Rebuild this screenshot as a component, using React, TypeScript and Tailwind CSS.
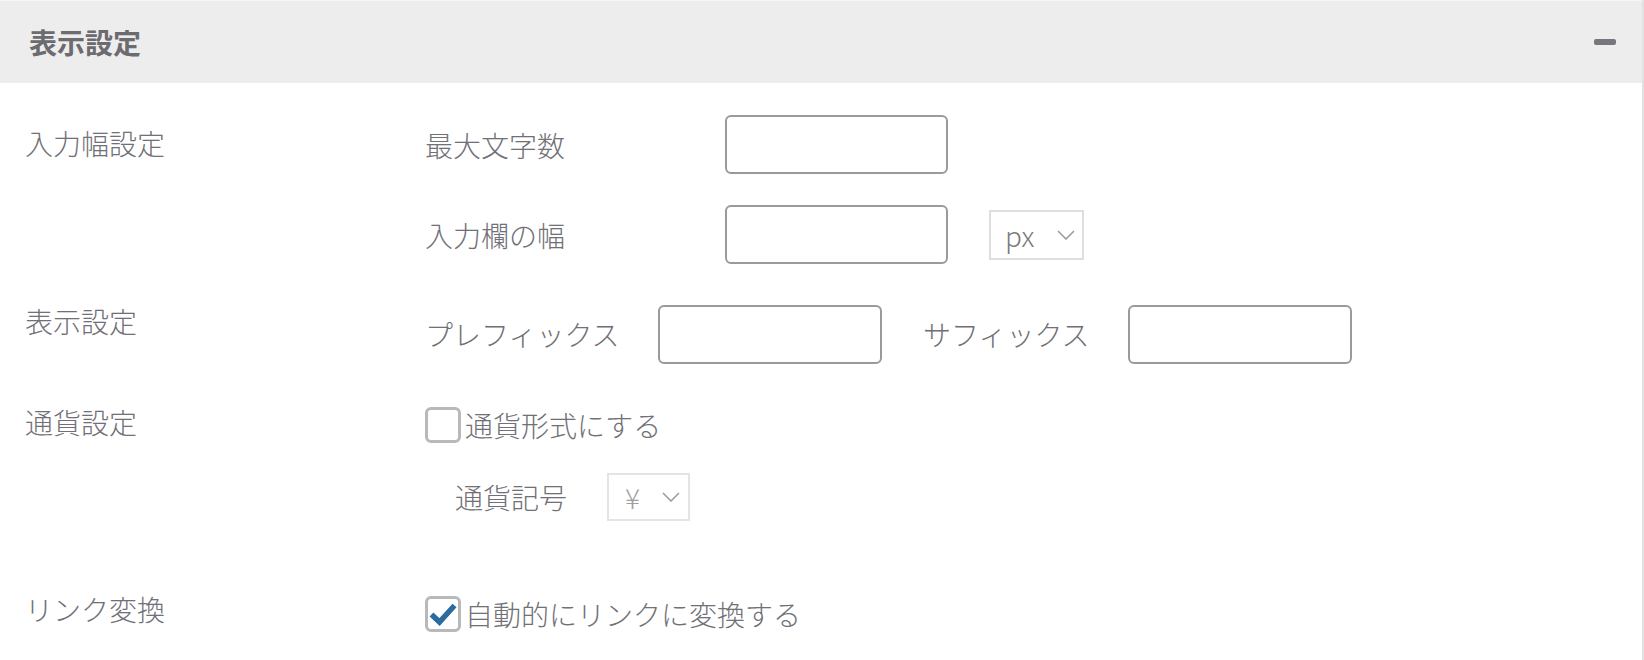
import React from "react"

const font = { fontFamily: '"Noto Sans CJK JP", "Noto Sans", sans-serif' }

function TextInput({ width }: { width: string }) {
  return (
    <input
      type="text"
      className={`${width} h-[59px] shrink-0 rounded-[6px] border-2 border-[#9a9a9a] bg-white outline-none`}
    />
  )
}

function Chevron() {
  return (
    <svg width="18" height="10" viewBox="0 0 18 10" fill="none" className="shrink-0">
      <path d="M1 1l8 8 8-8" stroke="#9c9c9c" strokeWidth="1.6" />
    </svg>
  )
}

function Checkbox({ checked }: { checked?: boolean }) {
  return (
    <span className="flex h-[36px] w-[36px] shrink-0 items-center justify-center rounded-[6px] border-[3px] border-[#b9b9b9] bg-white">
      {checked && (
        <svg width="28" height="24" viewBox="0 0 28 24">
          <path d="M2.5 12.5l8 7.5L25.5 3.5" stroke="#2c6aa0" strokeWidth="5.5" fill="none" strokeLinejoin="miter" />
        </svg>
      )}
    </span>
  )
}

export default function App() {
  return (
    <div
      className="h-[660px] w-[1644px] overflow-hidden border-r-2 border-[#e2e2e2] bg-white text-[28px] font-light leading-[40px] text-[#707076]"
      style={font}
    >
      {/* panel header */}
      <div className="flex h-[83px] items-center justify-between border-t border-[#f6f6f6] bg-[#ededed] pl-[29px] pr-[26px]">
        <h2 className="font-bold text-[#6b6b70]">表示設定</h2>
        <span className="h-[6px] w-[22px] rounded-[2px] bg-[#76767c]" />
      </div>

      <div className="pl-[25px]">
        {/* 入力幅設定 */}
        <div className="mt-[32px] flex">
          <div className="w-[400px] shrink-0 pt-[8px]">入力幅設定</div>
          <div className="flex flex-col gap-[31px]">
            <div className="flex h-[59px] items-center">
              <span className="w-[300px] shrink-0">最大文字数</span>
              <TextInput width="w-[223px]" />
            </div>
            <div className="flex h-[59px] items-center">
              <span className="w-[300px] shrink-0">入力欄の幅</span>
              <TextInput width="w-[223px]" />
              <div className="ml-[41px] flex h-[50px] w-[95px] items-center justify-between border-2 border-[#dedede] pl-[14px] pr-[7px] text-[#7a7a7a]">
                <span>px</span>
                <Chevron />
              </div>
            </div>
          </div>
        </div>

        {/* 表示設定 */}
        <div className="mt-[36px] flex">
          <div className="w-[400px] shrink-0 pt-[1px]">表示設定</div>
          <div className="mt-[5px] flex h-[58px] items-center">
            <span className="w-[233px] shrink-0">プレフィックス</span>
            <TextInput width="w-[224px]" />
            <span className="w-[246px] shrink-0 pl-[41px]">サフィックス</span>
            <TextInput width="w-[224px]" />
          </div>
        </div>

        {/* 通貨設定 */}
        <div className="mt-[39px] flex">
          <div className="w-[400px] shrink-0">通貨設定</div>
          <div className="flex flex-col pt-[3px]">
            <label className="flex items-center">
              <Checkbox />
              <span className="ml-[4px]">通貨形式にする</span>
            </label>
            <div className="mt-[28px] flex items-center pl-[30px]">
              <span className="w-[152px] shrink-0">通貨記号</span>
              <div className="flex h-[48px] w-[83px] items-center justify-between border-2 border-[#e4e4e4] pl-[16px] pr-[8px] text-[#a0a0a0]">
                <span>¥</span>
                <Chevron />
              </div>
            </div>
          </div>
        </div>

        {/* リンク変換 */}
        <div className="mt-[68px] flex">
          <div className="w-[400px] shrink-0">リンク変換</div>
          <div className="pt-[5px]">
            <label className="flex items-center">
              <Checkbox checked />
              <span className="ml-[4px]">自動的にリンクに変換する</span>
            </label>
          </div>
        </div>
      </div>
    </div>
  )
}
